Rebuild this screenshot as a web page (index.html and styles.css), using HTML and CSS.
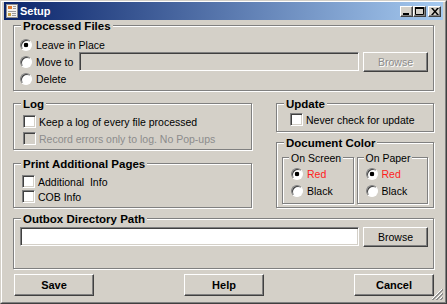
FILE: index.html
```html
<!DOCTYPE html>
<html lang="en">
<head>
    <meta charset="UTF-8">
    <title>Setup</title>
    <link rel="stylesheet" href="styles.css">
</head>
<body>

<div class="window">
    <div class="frame">

        <!-- Title bar -->
        <div class="titlebar">
            <svg class="app-icon" width="12" height="14" viewBox="0 0 12 14">
                <rect x="0.5" y="0.5" width="11" height="13" fill="#f4f2ee" stroke="#8c8c8c"/>
                <rect x="2" y="2" width="4" height="3" fill="#e07a30"/>
                <rect x="7" y="2" width="3" height="1" fill="#9a9a9a"/>
                <rect x="7" y="4" width="3" height="1" fill="#9a9a9a"/>
                <rect x="2" y="7" width="8" height="1" fill="#9a9a9a"/>
                <rect x="2" y="9" width="3" height="3" fill="#c8a040"/>
                <rect x="6" y="9" width="4" height="1" fill="#9a9a9a"/>
                <rect x="6" y="11" width="4" height="1" fill="#9a9a9a"/>
            </svg>
            <span class="title-text">Setup</span>
            <div class="caption-buttons">
                <span class="cap-btn">
                    <svg width="7" height="7" viewBox="0 0 7 7"><rect x="0" y="5" width="6" height="2" fill="#000"/></svg>
                </span>
                <span class="cap-btn">
                    <svg width="9" height="8" viewBox="0 0 9 8"><path d="M0.5 0.5h8v7h-8z" fill="none" stroke="#000"/><rect x="0" y="0" width="9" height="2" fill="#000"/></svg>
                </span>
                <span class="cap-btn close">
                    <svg width="8" height="7" viewBox="0 0 8 7"><path d="M0 0h2l2 2.5l2-2.5h2l-3 3.5l3 3.5h-2l-2-2.5l-2 2.5h-2l3-3.5z" fill="#000"/></svg>
                </span>
            </div>
        </div>

        <div class="client">

            <!-- Processed Files -->
            <div class="group processed">
                <div class="group-title">Processed Files</div>
                <div class="group-body">
                    <label class="option row-leave"><span class="radio checked"></span>Leave in Place</label>
                    <div class="move-row">
                        <label class="option move-label"><span class="radio"></span>Move to</label>
                        <input type="text" class="textbox" disabled>
                        <button class="btn browse" disabled>Browse</button>
                    </div>
                    <label class="option row-delete"><span class="radio"></span>Delete</label>
                </div>
            </div>

            <div class="middle">
                <div class="column">
                    <!-- Log -->
                    <div class="group log">
                        <div class="group-title">Log</div>
                        <div class="group-body">
                            <label class="option"><span class="check"></span>Keep a log of every file processed</label>
                            <label class="option disabled"><span class="check"></span>Record errors only to log. No Pop-ups</label>
                        </div>
                    </div>

                    <!-- Print Additional Pages -->
                    <div class="group print">
                        <div class="group-title">Print Additional Pages</div>
                        <div class="group-body">
                            <label class="option"><span class="check"></span>Additional&nbsp; Info</label>
                            <label class="option"><span class="check"></span>COB Info</label>
                        </div>
                    </div>
                </div>

                <div class="column">
                    <!-- Update -->
                    <div class="group update">
                        <div class="group-title">Update</div>
                        <div class="group-body">
                            <label class="option"><span class="check"></span>Never check for update</label>
                        </div>
                    </div>

                    <!-- Document Color -->
                    <div class="group doc-color">
                        <div class="group-title">Document Color</div>
                        <div class="group-body">
                            <div class="group inner">
                                <div class="group-title">On Screen</div>
                                <div class="group-body">
                                    <label class="option red"><span class="radio checked"></span>Red</label>
                                    <label class="option"><span class="radio"></span>Black</label>
                                </div>
                            </div>
                            <div class="group inner">
                                <div class="group-title">On Paper</div>
                                <div class="group-body">
                                    <label class="option red"><span class="radio checked"></span>Red</label>
                                    <label class="option"><span class="radio"></span>Black</label>
                                </div>
                            </div>
                        </div>
                    </div>
                </div>
            </div>

            <!-- Outbox Directory Path -->
            <div class="group outbox">
                <div class="group-title">Outbox Directory Path</div>
                <div class="group-body">
                    <input type="text" class="textbox">
                    <button class="btn browse">Browse</button>
                </div>
            </div>

            <div class="actions">
                <button class="btn action">Save</button>
                <button class="btn action">Help</button>
                <button class="btn action">Cancel</button>
            </div>

            <svg class="grip" width="12" height="12" viewBox="0 0 12 12">
                <path d="M11 1L1 11M11 5L5 11M11 9L9 11" stroke="#fff"/>
                <path d="M12 1L1 12M12 2L2 12M12 5L5 12M12 6L6 12M12 9L9 12M12 10L10 12" stroke="#808080" stroke-width="0.8"/>
            </svg>
        </div>
    </div>
</div>

</body>
</html>
```

FILE: styles.css
```css
/* Classic Windows dialog */
body {
    margin: 0;
    font-family: "Liberation Sans", Arial, sans-serif;
    font-size: 10.5px;
    color: #000;
    background-color: #d4d0c8;
}

.window {
    width: 447px;
    height: 304px;
    box-sizing: border-box;
    border: 1px solid;
    border-color: #d4d0c8 #404040 #404040 #d4d0c8;
    background-color: #d4d0c8;
}

.frame {
    height: 100%;
    box-sizing: border-box;
    border: 1px solid;
    border-color: #fff #808080 #808080 #fff;
    padding: 0 2px 2px 2px;
    display: flex;
    flex-direction: column;
}

/* Title bar */
.titlebar {
    height: 18px;
    flex: none;
    display: flex;
    align-items: center;
    padding: 0 2px;
    background: linear-gradient(to right, #0a246a, #a6caf0);
}

.app-icon {
    margin-right: 2px;
}

.title-text {
    color: #fff;
    font-weight: bold;
    font-size: 11px;
}

.caption-buttons {
    margin-left: auto;
    display: flex;
}

.cap-btn {
    width: 13px;
    height: 11px;
    box-sizing: border-box;
    border: 1px solid;
    border-color: #fff #404040 #404040 #fff;
    box-shadow: inset -1px -1px 0 #808080;
    background-color: #d4d0c8;
    display: flex;
    align-items: center;
    justify-content: center;
}

.cap-btn.close {
    margin-left: 2px;
}

/* Client area */
.client {
    flex: 1;
    position: relative;
    padding: 5px 9px 0 9px;
}

/* Group boxes */
.group {
    box-sizing: border-box;
    border: 1px solid #808080;
    box-shadow: 1px 1px 0 #fff, inset 1px 1px 0 #fff;
}

.group-title {
    width: fit-content;
    margin: -6px 0 0 7px;
    padding: 0 2px;
    background-color: #d4d0c8;
    font-weight: bold;
    font-size: 11.5px;
    line-height: 12px;
}

.option {
    display: flex;
    align-items: center;
    white-space: nowrap;
}

.option.disabled {
    color: #8c8c8c;
}

.option.red {
    color: #ff1c1c;
}

.radio {
    flex: none;
    width: 12px;
    height: 12px;
    box-sizing: border-box;
    border-radius: 50%;
    border: 1px solid;
    border-color: #808080 #fff #fff #808080;
    box-shadow: inset 1px 1px 0 #404040;
    background-color: #fff;
    margin-right: 4px;
}

.radio.checked {
    background: radial-gradient(circle, #000 0 2px, #fff 2.6px);
}

.check {
    flex: none;
    width: 13px;
    height: 13px;
    box-sizing: border-box;
    border: 1px solid;
    border-color: #808080 #fff #fff #808080;
    box-shadow: inset 1px 1px 0 #404040, inset -1px -1px 0 #d4d0c8;
    background-color: #fff;
    margin-right: 3px;
}

.disabled .check {
    background-color: #d4d0c8;
}

.textbox {
    box-sizing: border-box;
    height: 19px;
    margin: 0;
    padding: 0 3px;
    border: 1px solid;
    border-color: #808080 #fff #fff #808080;
    box-shadow: inset 1px 1px 0 #404040, inset -1px -1px 0 #d4d0c8;
    background-color: #fff;
    font: inherit;
    outline: none;
}

.textbox:disabled {
    background-color: #d4d0c8;
}

.btn {
    box-sizing: border-box;
    margin: 0;
    padding: 0;
    border: 1px solid;
    border-color: #fff #404040 #404040 #fff;
    box-shadow: inset -1px -1px 0 #808080;
    background-color: #d4d0c8;
    font-family: inherit;
    font-size: 10.5px;
    color: #000;
}

.btn:disabled {
    color: #8c8c8c;
    text-shadow: 1px 1px 0 #fff;
}

.browse {
    width: 65px;
    height: 20px;
    flex: none;
}

/* Processed Files */
.processed {
    height: 66px;
}

.processed .group-body {
    padding: 6px 5px 0 6px;
}

.row-leave {
    height: 14px;
}

.move-row {
    display: flex;
    align-items: center;
    gap: 4px;
    height: 19px;
}

.move-label {
    width: 59px;
    flex: none;
    margin-right: -4px;
}

.move-row .textbox {
    flex: 1;
}

.row-delete {
    height: 16px;
}

/* Middle area */
.middle {
    display: grid;
    grid-template-columns: 239px 158px;
    column-gap: 24px;
    margin-top: 12px;
}

.column {
    display: flex;
    flex-direction: column;
}

.log {
    height: 47px;
}

.log .group-body {
    padding: 3px 0 0 9px;
}

.log .option {
    height: 17px;
}

.print {
    height: 45px;
    margin-top: 13px;
}

.print .group-body {
    padding: 4px 0 0 8px;
}

.print .option {
    height: 15px;
}

.update {
    height: 29px;
}

.update .group-body {
    padding: 1px 0 0 13px;
}

.update .option {
    height: 17px;
}

.doc-color {
    height: 66px;
    margin-top: 10px;
}

.doc-color .group-body {
    display: flex;
    gap: 3px;
    padding: 8px 5px 0 5px;
}

.group.inner {
    flex: 1;
    height: 47px;
}

.inner .group-title {
    margin-left: 6px;
    font-weight: normal;
    font-size: 10.5px;
}

.inner .group-body {
    display: block;
    padding: 1px 0 0 8px;
}

.inner .option {
    height: 17px;
}

/* Outbox */
.outbox {
    height: 51px;
    margin-top: 10px;
}

.outbox .group-body {
    display: flex;
    align-items: flex-start;
    gap: 4px;
    padding: 2px 5px 0 6px;
}

.outbox .textbox {
    flex: 1;
}

/* Bottom buttons */
.actions {
    display: flex;
    justify-content: space-between;
    margin-top: 5px;
    padding-left: 1px;
}

.action {
    width: 80px;
    height: 22px;
    font-weight: bold;
    font-size: 11px;
}

.grip {
    position: absolute;
    right: 0;
    bottom: 0;
}
```
